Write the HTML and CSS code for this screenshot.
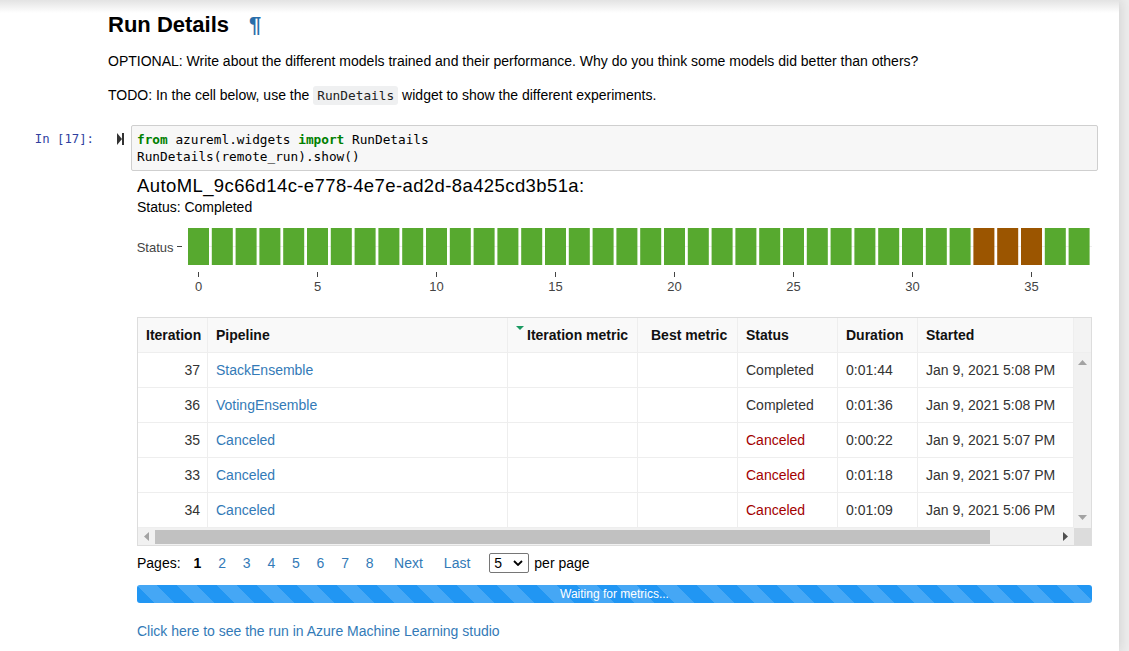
FILE: index.html
```html
<!DOCTYPE html>
<html>
<head>
<meta charset="utf-8">
<link rel="stylesheet" href="styles.css">
</head>
<body>
<div class="page">
  <div class="md">
    <h2 class="title">Run Details<span class="anchor">¶</span></h2>
    <p>OPTIONAL: Write about the different models trained and their performance. Why do you think some models did better than others?</p>
    <p>TODO: In the cell below, use the <code class="inline">RunDetails</code> widget to show the different experiments.</p>
  </div>

  <div class="cell">
    <div class="prompt">In&nbsp;[17]:</div>
    <div class="runbtn"><svg width="7" height="12" viewBox="0 0 7 12"><polygon points="0,0 5,6 0,12" fill="#333"/><rect x="5" y="0" width="2" height="12" fill="#333"/></svg></div>
    <div class="input"><div class="line"><span class="kw">from</span> azureml.widgets <span class="kw">import</span> RunDetails</div><div class="line">RunDetails(remote_run).show()</div></div>
  </div>

  <div class="output">
    <div class="run-title">AutoML_9c66d14c-e778-4e7e-ad2d-8a425cd3b51a:</div>
    <div class="run-status">Status: Completed</div>

    <svg class="chart" width="955" height="76" viewBox="0 0 955 76">
      <line x1="51" y1="26.5" x2="955" y2="26.5" stroke="#eeeeee" stroke-width="1"/>
      <g fill="#57a92f">
        <rect x="51" y="8" width="21" height="37"/>
        <rect x="74.8" y="8" width="21" height="37"/>
        <rect x="98.6" y="8" width="21" height="37"/>
        <rect x="122.4" y="8" width="21" height="37"/>
        <rect x="146.2" y="8" width="21" height="37"/>
        <rect x="170" y="8" width="21" height="37"/>
        <rect x="193.8" y="8" width="21" height="37"/>
        <rect x="217.6" y="8" width="21" height="37"/>
        <rect x="241.4" y="8" width="21" height="37"/>
        <rect x="265.2" y="8" width="21" height="37"/>
        <rect x="289" y="8" width="21" height="37"/>
        <rect x="312.8" y="8" width="21" height="37"/>
        <rect x="336.6" y="8" width="21" height="37"/>
        <rect x="360.4" y="8" width="21" height="37"/>
        <rect x="384.2" y="8" width="21" height="37"/>
        <rect x="408" y="8" width="21" height="37"/>
        <rect x="431.8" y="8" width="21" height="37"/>
        <rect x="455.6" y="8" width="21" height="37"/>
        <rect x="479.4" y="8" width="21" height="37"/>
        <rect x="503.2" y="8" width="21" height="37"/>
        <rect x="527" y="8" width="21" height="37"/>
        <rect x="550.8" y="8" width="21" height="37"/>
        <rect x="574.6" y="8" width="21" height="37"/>
        <rect x="598.4" y="8" width="21" height="37"/>
        <rect x="622.2" y="8" width="21" height="37"/>
        <rect x="646" y="8" width="21" height="37"/>
        <rect x="669.8" y="8" width="21" height="37"/>
        <rect x="693.6" y="8" width="21" height="37"/>
        <rect x="717.4" y="8" width="21" height="37"/>
        <rect x="741.2" y="8" width="21" height="37"/>
        <rect x="765" y="8" width="21" height="37"/>
        <rect x="788.8" y="8" width="21" height="37"/>
        <rect x="812.6" y="8" width="21" height="37"/>
        <rect x="907.8" y="8" width="21" height="37"/>
        <rect x="931.6" y="8" width="21" height="37"/>
      </g>
      <g fill="#9b5500">
        <rect x="836.4" y="8" width="21" height="37"/>
        <rect x="860.2" y="8" width="21" height="37"/>
        <rect x="884" y="8" width="21" height="37"/>
      </g>
      <text x="36.5" y="31.5" class="axis" text-anchor="end">Status</text>
      <line x1="40" y1="26.5" x2="45" y2="26.5" stroke="#444" stroke-width="1"/>
      <g stroke="#444" stroke-width="1">
        <line x1="61.5" y1="52" x2="61.5" y2="57"/>
        <line x1="180.5" y1="52" x2="180.5" y2="57"/>
        <line x1="299.5" y1="52" x2="299.5" y2="57"/>
        <line x1="418.5" y1="52" x2="418.5" y2="57"/>
        <line x1="537.5" y1="52" x2="537.5" y2="57"/>
        <line x1="656.5" y1="52" x2="656.5" y2="57"/>
        <line x1="775.5" y1="52" x2="775.5" y2="57"/>
        <line x1="894.5" y1="52" x2="894.5" y2="57"/>
      </g>
      <g class="axis" text-anchor="middle">
        <text x="61.5" y="71">0</text>
        <text x="180.5" y="71">5</text>
        <text x="299.5" y="71">10</text>
        <text x="418.5" y="71">15</text>
        <text x="537.5" y="71">20</text>
        <text x="656.5" y="71">25</text>
        <text x="775.5" y="71">30</text>
        <text x="894.5" y="71">35</text>
      </g>
    </svg>

    <div class="grid-wrap">
      <div class="grid-main">
        <div class="grid">
          <div class="c h">Iteration</div>
          <div class="c h">Pipeline</div>
          <div class="c h"><svg class="sort" width="8" height="4" viewBox="0 0 8 4"><polygon points="0,0 8,0 4,4" fill="#1b9a62"/></svg>Iteration metric</div>
          <div class="c h bm">Best metric</div>
          <div class="c h">Status</div>
          <div class="c h">Duration</div>
          <div class="c h">Started</div>

          <div class="c num">37</div>
          <div class="c"><a class="lnk">StackEnsemble</a></div>
          <div class="c"></div>
          <div class="c"></div>
          <div class="c">Completed</div>
          <div class="c">0:01:44</div>
          <div class="c">Jan 9, 2021 5:08 PM</div>

          <div class="c num">36</div>
          <div class="c"><a class="lnk">VotingEnsemble</a></div>
          <div class="c"></div>
          <div class="c"></div>
          <div class="c">Completed</div>
          <div class="c">0:01:36</div>
          <div class="c">Jan 9, 2021 5:08 PM</div>

          <div class="c num">35</div>
          <div class="c"><a class="lnk">Canceled</a></div>
          <div class="c"></div>
          <div class="c"></div>
          <div class="c cancel">Canceled</div>
          <div class="c">0:00:22</div>
          <div class="c">Jan 9, 2021 5:07 PM</div>

          <div class="c num">33</div>
          <div class="c"><a class="lnk">Canceled</a></div>
          <div class="c"></div>
          <div class="c"></div>
          <div class="c cancel">Canceled</div>
          <div class="c">0:01:18</div>
          <div class="c">Jan 9, 2021 5:07 PM</div>

          <div class="c num">34</div>
          <div class="c"><a class="lnk">Canceled</a></div>
          <div class="c"></div>
          <div class="c"></div>
          <div class="c cancel">Canceled</div>
          <div class="c">0:01:09</div>
          <div class="c">Jan 9, 2021 5:06 PM</div>
        </div>
        <div class="vscroll">
          <div class="vs-head"></div>
          <div class="vs-track">
            <svg width="9" height="5" viewBox="0 0 9 5"><polygon points="0,5 9,5 4.5,0" fill="#a3a3a3"/></svg>
            <svg width="9" height="5" viewBox="0 0 9 5"><polygon points="0,0 9,0 4.5,5" fill="#a3a3a3"/></svg>
          </div>
        </div>
      </div>
      <div class="hscroll">
        <div class="hs-arrow"><svg width="5" height="9" viewBox="0 0 5 9"><polygon points="5,0 5,9 0,4.5" fill="#a3a3a3"/></svg></div>
        <div class="hs-track"><div class="hs-thumb"></div></div>
        <div class="hs-arrow"><svg width="5" height="9" viewBox="0 0 5 9"><polygon points="0,0 0,9 5,4.5" fill="#505050"/></svg></div>
        <div class="hs-corner"></div>
      </div>
    </div>

    <div class="pager">
      <span class="pg-label">Pages:</span>
      <span class="pg cur">1</span>
      <a class="pg">2</a>
      <a class="pg">3</a>
      <a class="pg">4</a>
      <a class="pg">5</a>
      <a class="pg">6</a>
      <a class="pg">7</a>
      <a class="pg">8</a>
      <a class="pg next">Next</a>
      <a class="pg last">Last</a>
      <div class="select"><span>5</span><svg width="10" height="6" viewBox="0 0 10 6"><polyline points="1,1 5,5 9,1" fill="none" stroke="#000" stroke-width="1.8"/></svg></div>
      <span class="perpage">per page</span>
    </div>

    <div class="progress">Waiting for metrics...</div>

    <a class="studio">Click here to see the run in Azure Machine Learning studio</a>
  </div>
</div>
</body>
</html>
```

FILE: styles.css
```css
html, body {
  margin: 0;
  padding: 0;
}
body {
  background: #eeeeee;
  font-family: "Liberation Sans", Arial, sans-serif;
  color: #000;
  overflow: hidden;
}
.page {
  width: 1119px;
  height: 651px;
  box-sizing: border-box;
  padding-top: 12px;
  background: linear-gradient(#e3e3e3 0, #ffffff 13px);
  box-shadow: 0 0 12px 1px rgba(87, 87, 87, 0.2);
}
.md {
  padding-left: 108px;
}
.title {
  margin: 0;
  font-size: 22px;
  line-height: 26px;
  font-weight: bold;
}
.anchor {
  color: #296eaa;
  margin-left: 20px;
}
.md p {
  margin: 13px 0 0;
  font-size: 14px;
  line-height: 20px;
}
.md p + p {
  margin-top: 13.5px;
}
.inline {
  font-family: "DejaVu Sans Mono", monospace;
  font-size: 12.8px;
  background: #eff0f1;
  padding: 2px 4px;
  border-radius: 3px;
  color: #222;
}
.cell {
  display: flex;
  align-items: flex-start;
  margin-top: 19.5px;
  padding-right: 21px;
}
.prompt {
  width: 97px;
  flex: none;
  box-sizing: border-box;
  padding-top: 6px;
  padding-right: 3px;
  text-align: right;
  font-family: "DejaVu Sans Mono", monospace;
  font-size: 12.3px;
  line-height: 17px;
  color: #303f9f;
}
.runbtn {
  flex: none;
  margin-left: 20px;
  width: 7px;
  padding-top: 8px;
}
.runbtn svg {
  display: block;
}
.input {
  flex: 1;
  margin-left: 7px;
  border: 1px solid #cfcfcf;
  border-radius: 2px;
  background: #f7f7f7;
  padding: 5px 5px;
  font-family: "DejaVu Sans Mono", monospace;
  font-size: 12.75px;
  line-height: 17px;
  color: #000;
}
.line {
  white-space: pre;
  height: 17px;
}
.kw {
  color: #008000;
  font-weight: bold;
}
.output {
  margin-left: 137px;
  width: 955px;
}
.run-title {
  margin-top: 4px;
  font-size: 18.5px;
  letter-spacing: 0.4px;
  line-height: 22px;
  color: #000;
}
.run-status {
  margin-top: 1px;
  font-size: 14px;
  line-height: 18px;
  color: #000;
}
.chart {
  display: block;
  margin-top: 4px;
}
.axis {
  font-family: "Liberation Sans", Arial, sans-serif;
  font-size: 13px;
  fill: #444;
}
.grid-wrap {
  margin-top: 21px;
  border: 1px solid #dddddd;
  width: 955px;
  box-sizing: border-box;
}
.grid-main {
  display: flex;
}
.grid {
  display: grid;
  grid-template-columns: 70px 300px 130px 100px 100px 80px 156px;
  grid-auto-rows: 35px;
}
.c {
  box-sizing: border-box;
  border-right: 1px solid #eeeeee;
  border-bottom: 1px solid #eeeeee;
  padding: 0 8px;
  display: flex;
  align-items: center;
  font-size: 14px;
  color: #333;
  white-space: nowrap;
  overflow: hidden;
  background: #fff;
}
.c.h {
  background: #f9f9f9;
  font-weight: bold;
  color: #111;
}
.c.bm {
  padding-left: 13px;
}
.c.num {
  justify-content: flex-end;
  padding-right: 7px;
}
.sort {
  align-self: flex-start;
  margin-top: 8px;
  margin-right: 3px;
  flex: none;
}
.lnk {
  color: #337ab7;
  text-decoration: none;
}
.cancel {
  color: #a30000;
}
.vscroll {
  width: 17px;
  display: flex;
  flex-direction: column;
}
.vs-head {
  height: 35px;
  box-sizing: border-box;
  background: #f3f3f3;
  border-bottom: 1px solid #eeeeee;
}
.vs-track {
  flex: 1;
  background: #f1f1f1;
  display: flex;
  flex-direction: column;
  justify-content: space-between;
  align-items: center;
  padding: 7px 0 8px;
}
.vs-track svg {
  display: block;
}
.hscroll {
  display: flex;
  height: 17px;
  background: #f1f1f1;
}
.hs-arrow {
  width: 17px;
  display: flex;
  align-items: center;
  justify-content: center;
}
.hs-arrow svg {
  display: block;
}
.hs-track {
  flex: 1;
  display: flex;
  align-items: center;
}
.hs-thumb {
  width: 835px;
  height: 14px;
  background: #c1c1c1;
}
.hs-corner {
  width: 17px;
  background: #dcdcdc;
}
.pager {
  display: flex;
  align-items: center;
  margin-top: 7px;
  height: 20px;
  font-size: 14px;
  color: #000;
}
.pg {
  color: #337ab7;
  margin-left: 16.8px;
  text-decoration: none;
}
.pg.cur {
  color: #000;
  font-weight: bold;
  margin-left: 13px;
}
.pg.next {
  margin-left: 20.5px;
}
.pg.last {
  margin-left: 21px;
}
.select {
  margin-left: 19px;
  width: 40px;
  height: 20px;
  box-sizing: border-box;
  border: 1px solid #767676;
  border-radius: 2px;
  display: flex;
  align-items: center;
  justify-content: space-between;
  padding: 0 5px 0 4px;
  font-size: 14px;
  background: #fff;
}
.select svg {
  display: block;
}
.perpage {
  margin-left: 5px;
}
.progress {
  margin-top: 12px;
  height: 18px;
  border-radius: 3px;
  background-color: #2196f3;
  background-image: linear-gradient(45deg, rgba(255,255,255,0.16) 25%, transparent 25%, transparent 50%, rgba(255,255,255,0.16) 50%, rgba(255,255,255,0.16) 75%, transparent 75%, transparent);
  background-size: 40px 40px;
  color: #fff;
  font-size: 12px;
  line-height: 18px;
  text-align: center;
}
.studio {
  display: block;
  margin-top: 19px;
  font-size: 14px;
  line-height: 18px;
  color: #337ab7;
  text-decoration: none;
}
```
